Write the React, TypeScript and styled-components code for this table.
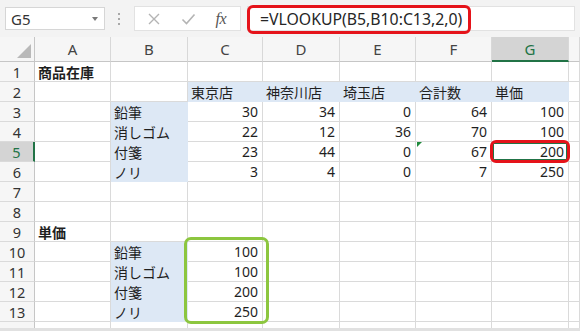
import React from "react";
import styled, { createGlobalStyle, css } from "styled-components";

const GlobalStyle = createGlobalStyle`
  html, body {
    margin: 0;
    padding: 0;
    background: #ffffff;
  }
  body {
    width: 580px;
    height: 331px;
    overflow: hidden;
    font-family: "Noto Sans", "Noto Sans CJK JP", sans-serif;
  }
`;

const GRID_LINE = "#dadada";
const HEADER_LINE = "#c6c6c6";
const FILL = "#dde8f5";
const EXCEL_GREEN = "#217346";

type Align = "left" | "right";

interface CellData {
  text?: string;
  align?: Align;
  bold?: boolean;
  fill?: boolean;
  selected?: boolean;
  flagged?: boolean;
}

const COLUMNS = ["A", "B", "C", "D", "E", "F", "G", "H"];
const SELECTED_COL = "G";
const SELECTED_ROW = 5;

const label = (text: string, fill = true): CellData => ({ text, fill, align: "left" });
const num = (n: number): CellData => ({ text: String(n), align: "right" });

// sheet contents, indexed by row number then column letter
const SHEET: Record<number, Record<string, CellData>> = {
  1: { A: { text: "商品在庫", bold: true, align: "left" } },
  2: {
    C: label("東京店"),
    D: label("神奈川店"),
    E: label("埼玉店"),
    F: label("合計数"),
    G: label("単価"),
  },
  3: { B: label("鉛筆"), C: num(30), D: num(34), E: num(0), F: num(64), G: num(100) },
  4: { B: label("消しゴム"), C: num(22), D: num(12), E: num(36), F: num(70), G: num(100) },
  5: {
    B: label("付箋"),
    C: num(23),
    D: num(44),
    E: num(0),
    F: { ...num(67), flagged: true },
    G: { ...num(200), selected: true },
  },
  6: { B: label("ノリ"), C: num(3), D: num(4), E: num(0), F: num(7), G: num(250) },
  9: { A: { text: "単価", bold: true, align: "left" } },
  10: { B: label("鉛筆"), C: num(100) },
  11: { B: label("消しゴム"), C: num(100) },
  12: { B: label("付箋"), C: num(200) },
  13: { B: label("ノリ"), C: num(250) },
};

const ROW_COUNT = 14;

const Window = styled.div`
  display: flex;
  flex-direction: column;
  width: 580px;
  height: 331px;
  overflow: hidden;
`;

const Toolbar = styled.div`
  display: flex;
  align-items: center;
  height: 37px;
  flex: none;
  padding-left: 5px;
  box-sizing: border-box;
  background: #f3f3f3;
`;

const NameBox = styled.div`
  position: relative;
  display: flex;
  align-items: center;
  width: 100px;
  height: 23px;
  box-sizing: border-box;
  padding-left: 5px;
  background: #ffffff;
  border: 1px solid #d6d6d6;
  font-size: 15px;
  color: #333333;

  &::after {
    content: "";
    position: absolute;
    right: 6px;
    top: 9px;
    border-left: 3px solid transparent;
    border-right: 3px solid transparent;
    border-top: 4px solid #7a7a7a;
  }
`;

const Grip = styled.div`
  display: flex;
  flex-direction: column;
  gap: 3px;
  margin: 0 14px 0 13px;

  span {
    width: 2px;
    height: 2px;
    background: #a8a8a8;
  }
`;

const ActionBox = styled.div`
  display: flex;
  align-items: center;
  justify-content: space-around;
  width: 107px;
  height: 25px;
  box-sizing: border-box;
  padding: 0 4px 0 2px;
  background: #ffffff;
  border: 1px solid #e2e2e2;
`;

const FxLabel = styled.span`
  font-family: "Liberation Serif", "DejaVu Serif", serif;
  font-style: italic;
  font-size: 16px;
  color: #555555;
  letter-spacing: -0.5px;
`;

const FormulaBar = styled.div`
  position: relative;
  display: flex;
  align-items: center;
  width: 328px;
  height: 25px;
  margin-left: 6px;
  box-sizing: border-box;
  padding-left: 12px;
  background: #ffffff;
  border: 1px solid #e2e2e2;
  font-size: 15.8px;
  color: #262626;
  white-space: nowrap;
`;

const Callout = styled.div<{ $color: string }>`
  position: absolute;
  box-sizing: border-box;
  border: 3px solid ${({ $color }) => $color};
  border-radius: 6px;
  pointer-events: none;
  z-index: 3;
`;

const FormulaCallout = styled(Callout)`
  left: -1px;
  top: -2px;
  width: 224px;
  height: 29px;
`;

const Sheet = styled.div`
  position: relative;
  flex: 1;
  display: grid;
  grid-template-columns: 35px 76px 77px 75px 77px 76px 76px 77px 1fr;
  grid-template-rows: 25px repeat(${ROW_COUNT}, 20px);
  overflow: hidden;
  font-size: 14px;
  color: #1f1f1f;
`;

const headerBase = css`
  display: flex;
  align-items: center;
  justify-content: center;
  box-sizing: border-box;
  background: #f6f6f6;
  color: #444444;
  font-size: 15px;
`;

const Corner = styled.div`
  ${headerBase};
  position: relative;
  border-right: 1px solid ${HEADER_LINE};
  border-bottom: 1px solid ${HEADER_LINE};

  &::after {
    content: "";
    position: absolute;
    right: 3px;
    bottom: 3px;
    border-left: 14px solid transparent;
    border-bottom: 14px solid #b9b9b9;
  }
`;

const ColHeader = styled.div<{ $active: boolean }>`
  ${headerBase};
  border-right: 1px solid #d8d8d8;
  border-bottom: 1px solid ${HEADER_LINE};
  ${({ $active }) =>
    $active &&
    css`
      background: #d4d4d4;
      color: ${EXCEL_GREEN};
      border-bottom: 2px solid ${EXCEL_GREEN};
    `}
`;

const RowHeader = styled.div<{ $active: boolean }>`
  ${headerBase};
  font-size: 14.5px;
  color: #333333;
  border-right: 1px solid ${HEADER_LINE};
  border-bottom: 1px solid ${GRID_LINE};
  ${({ $active }) =>
    $active &&
    css`
      background: #d4d4d4;
      color: ${EXCEL_GREEN};
      border-right: 2px solid ${EXCEL_GREEN};
    `}
`;

const Cell = styled.div<{ $align: Align; $bold: boolean; $fill: boolean; $selected: boolean }>`
  position: relative;
  display: flex;
  align-items: center;
  justify-content: ${({ $align }) => ($align === "right" ? "flex-end" : "flex-start")};
  box-sizing: border-box;
  padding: 0 4px 0 3px;
  white-space: nowrap;
  font-weight: ${({ $bold }) => ($bold ? 700 : 400)};
  background: ${({ $fill }) => ($fill ? FILL : "#ffffff")};
  border-right: 1px solid ${({ $fill }) => ($fill ? FILL : GRID_LINE)};
  border-bottom: 1px solid ${({ $fill }) => ($fill ? FILL : GRID_LINE)};
  ${({ $selected }) =>
    $selected &&
    css`
      box-shadow: inset 0 0 0 2px ${EXCEL_GREEN};
    `}
`;

const ErrorFlag = styled.span`
  position: absolute;
  left: 1px;
  top: 0;
  border-right: 5px solid transparent;
  border-top: 5px solid #1e8a3c;
`;

const CellCallout = styled(Callout)`
  left: -2px;
  top: -2px;
  right: -2px;
  bottom: -2px;
`;

// absolutely placed grid child over C10:C13; it takes no auto-placed slot
const RangeCallout = styled.div`
  position: absolute;
  grid-column: 4 / 5;
  grid-row: 11 / 15;
  left: -4px;
  top: -5px;
  right: -6px;
  bottom: -2px;
  border: 3px solid #8cc63f;
  border-radius: 7px;
  pointer-events: none;
  z-index: 3;
`;

const ScrollEdge = styled.div`
  flex: none;
  height: 3px;
  background: #e1e1e1;
`;

const CancelIcon = () => (
  <svg width="14" height="14" viewBox="0 0 14 14">
    <path d="M2 2 L12 12 M12 2 L2 12" stroke="#b4b4b4" strokeWidth="1.4" fill="none" />
  </svg>
);

const EnterIcon = () => (
  <svg width="15" height="12" viewBox="0 0 15 12">
    <path d="M1.5 6.5 L5.5 10.5 L13.5 1.5" stroke="#b4b4b4" strokeWidth="1.6" fill="none" />
  </svg>
);

const App: React.FC = () => (
  <Window>
    <GlobalStyle />
    <Toolbar>
      <NameBox>G5</NameBox>
      <Grip>
        <span />
        <span />
        <span />
      </Grip>
      <ActionBox>
        <CancelIcon />
        <EnterIcon />
        <FxLabel>fx</FxLabel>
      </ActionBox>
      <FormulaBar>
        =VLOOKUP(B5,B10:C13,2,0)
        <FormulaCallout $color="#e5131a" />
      </FormulaBar>
    </Toolbar>

    <Sheet>
      <Corner />
      {COLUMNS.map((col) => (
        <ColHeader key={col} $active={col === SELECTED_COL}>
          {col === "H" ? "" : col}
        </ColHeader>
      ))}

      {Array.from({ length: ROW_COUNT }, (_, i) => i + 1).map((row) => (
        <React.Fragment key={row}>
          <RowHeader $active={row === SELECTED_ROW}>{row}</RowHeader>
          {COLUMNS.map((col) => {
            const cell = SHEET[row]?.[col] ?? {};
            return (
              <Cell
                key={col}
                $align={cell.align ?? "left"}
                $bold={!!cell.bold}
                $fill={!!cell.fill}
                $selected={!!cell.selected}
              >
                {cell.flagged && <ErrorFlag />}
                {cell.text}
                {cell.selected && <CellCallout $color="#e5131a" />}
              </Cell>
            );
          })}
        </React.Fragment>
      ))}

      <RangeCallout />
    </Sheet>
    <ScrollEdge />
  </Window>
);

export default App;
